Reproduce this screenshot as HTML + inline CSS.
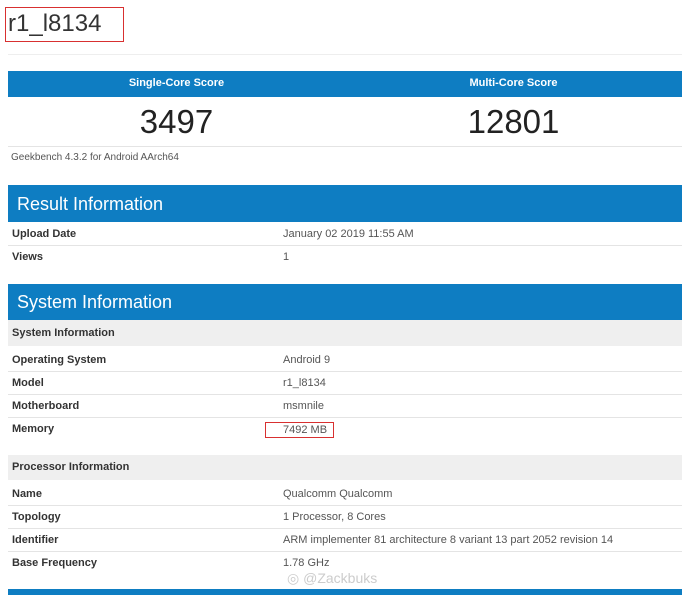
<!DOCTYPE html>
<html><head><style>
body{margin:0;width:690px;height:595px;background:#fff;font-family:"Liberation Sans",sans-serif;position:relative;overflow:hidden;color:#333}
.a{position:absolute}
.blue{background:#0e7dc2;left:8px;width:674px}
.lbl{position:absolute;left:12px;font-size:11px;font-weight:bold;color:#333}
.val{position:absolute;left:283px;font-size:11px;color:#555}
.ln{position:absolute;left:8px;width:674px;height:1px;background:#e4e4e4}
.gray{position:absolute;left:8px;width:674px;background:#efefef}
</style></head><body>
<div class="a" style="left:8px;top:10px;font-size:24px;color:#333">r1_l8134</div>
<div class="a" style="left:5px;top:7px;width:117px;height:33px;border:1px solid #d83030"></div>
<div class="ln" style="top:54px;background:#eee"></div>
<div class="a blue" style="top:71px;height:26px"></div>
<div class="a" style="left:8px;width:337px;top:77px;text-align:center;color:#fff;font-size:11px;font-weight:bold">Single-Core Score</div>
<div class="a" style="left:345px;width:337px;top:77px;text-align:center;color:#fff;font-size:11px;font-weight:bold">Multi-Core Score</div>
<div class="a" style="left:8px;width:337px;top:103px;text-align:center;font-size:33px;color:#222">3497</div>
<div class="a" style="left:345px;width:337px;top:103px;text-align:center;font-size:33px;color:#222">12801</div>
<div class="ln" style="top:146px"></div>
<div class="a" style="left:11px;top:152px;font-size:10px;color:#555">Geekbench 4.3.2 for Android AArch64</div>
<div class="a blue" style="top:185px;height:37px"></div>
<div class="a" style="left:17px;top:194px;font-size:18px;color:#fff">Result Information</div>
<div class="lbl" style="top:228px">Upload Date</div><div class="val" style="top:228px">January 02 2019 11:55 AM</div>
<div class="ln" style="top:245px"></div>
<div class="lbl" style="top:251px">Views</div><div class="val" style="top:251px">1</div>
<div class="a blue" style="top:284px;height:36px"></div>
<div class="a" style="left:17px;top:292px;font-size:18px;color:#fff">System Information</div>
<div class="gray" style="top:320px;height:26px"></div>
<div class="lbl" style="top:327px">System Information</div>
<div class="lbl" style="top:354px">Operating System</div><div class="val" style="top:354px">Android 9</div>
<div class="ln" style="top:371px"></div>
<div class="lbl" style="top:377px">Model</div><div class="val" style="top:377px">r1_l8134</div>
<div class="ln" style="top:394px"></div>
<div class="lbl" style="top:400px">Motherboard</div><div class="val" style="top:400px">msmnile</div>
<div class="ln" style="top:417px"></div>
<div class="lbl" style="top:423px">Memory</div><div class="val" style="top:424px">7492 MB</div>
<div class="a" style="left:265px;top:422px;width:67px;height:14px;border:1px solid #d83030"></div>
<div class="gray" style="top:455px;height:25px"></div>
<div class="lbl" style="top:461px">Processor Information</div>
<div class="lbl" style="top:488px">Name</div><div class="val" style="top:488px">Qualcomm Qualcomm</div>
<div class="ln" style="top:505px"></div>
<div class="lbl" style="top:511px">Topology</div><div class="val" style="top:511px">1 Processor, 8 Cores</div>
<div class="ln" style="top:528px"></div>
<div class="lbl" style="top:534px">Identifier</div><div class="val" style="top:534px">ARM implementer 81 architecture 8 variant 13 part 2052 revision 14</div>
<div class="ln" style="top:551px"></div>
<div class="lbl" style="top:557px">Base Frequency</div><div class="val" style="top:557px">1.78 GHz</div>
<div class="a" style="left:287px;top:570px;font-size:14px;color:#ccc">◎ @Zackbuks</div>
<div class="a blue" style="top:589px;height:6px"></div>
</body></html>
